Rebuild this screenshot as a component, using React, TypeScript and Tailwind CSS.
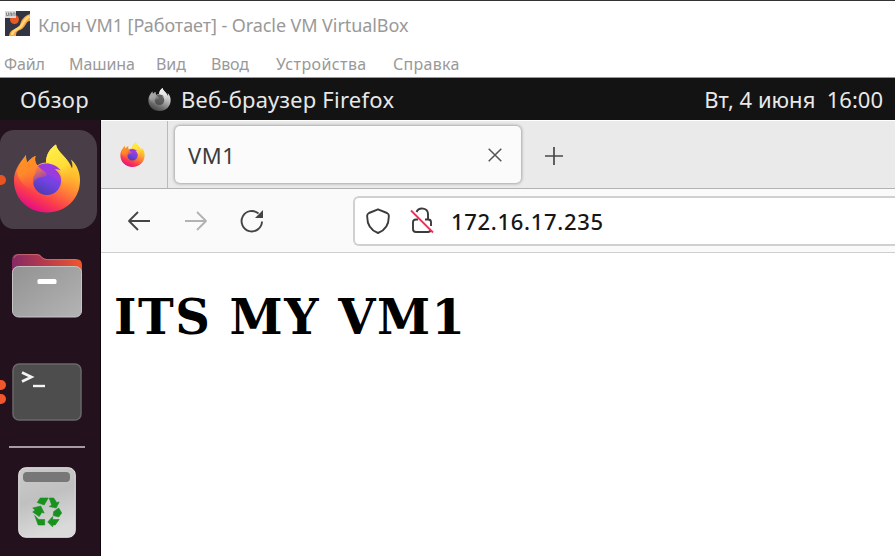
import React from "react";

function FirefoxLogo({ id, className, gray = false }: { id: string; className: string; gray?: boolean }) {
  return (
    <svg viewBox="0 0 66 68" className={className} style={gray ? { filter: "grayscale(1) brightness(1.05)" } : undefined}>
      <defs>
        <linearGradient id={id + "a"} x1="0.85" y1="0.1" x2="0.4" y2="1">
          <stop offset="0" stopColor="#ffe23c" />
          <stop offset="0.3" stopColor="#ffbd2e" />
          <stop offset="0.55" stopColor="#ff8036" />
          <stop offset="0.8" stopColor="#fb3c4c" />
          <stop offset="1" stopColor="#e8117f" />
        </linearGradient>
        <linearGradient id={id + "b"} x1="0.8" y1="0" x2="0.3" y2="1">
          <stop offset="0" stopColor="#9a3be0" />
          <stop offset="0.5" stopColor="#7542e5" />
          <stop offset="1" stopColor="#4a3cae" />
        </linearGradient>
        <linearGradient id={id + "c"} x1="0.3" y1="0" x2="0.6" y2="1">
          <stop offset="0" stopColor="#fff04a" />
          <stop offset="0.5" stopColor="#ffdc36" />
          <stop offset="0.95" stopColor="#ffa52d" stopOpacity="0" />
        </linearGradient>
        <linearGradient id={id + "d"} x1="0" y1="0" x2="0.5" y2="1">
          <stop offset="0" stopColor="#ff9220" />
          <stop offset="0.5" stopColor="#ff8a2a" />
          <stop offset="1" stopColor="#ff5a3a" stopOpacity="0" />
        </linearGradient>
      </defs>
      <path
        fill={`url(#${id}a)`}
        d="M33 68C14 68 0 54 0 36C0 26 5 19 12 10.500C12 13 12 16 13.500 18C15 16 18 13 21.500 11.500C20.500 15 21 18 23 21C26 19 29 18 32 18C32 10 36 4 42 0C43 7 51 11 56 20L58 24C59 21 58 18 57 15C63 20 66 28 66 36C66 54 52 68 33 68Z"
      />
      <path
        fill={`url(#${id}c)`}
        d="M32 18C32 10 36 4 42 0C43 7 51 11 56 20C62 31 58 45 47 49C50 40 49 30 44 25C41 21 36 19 32 18Z"
      />
      <circle cx="33" cy="36.500" r="14" fill={`url(#${id}b)`} />
      <path fill="#9a3be0" d="M23 22C29 17 41 18 47 26C44 25 42 24.500 40 25C44 27 47 32 46.500 37L31 28L21 27Z" />
      <path
        fill={`url(#${id}d)`}
        d="M12 10.500C12 13 12 16 13.500 18C15 16 18 13 21.500 11.500C20.500 15 21 18 24 21.500C27 25.500 32 27 33 30C32 33 27 32 24 33.500C20 36 18 40 21 46C12 44 4 36 3 27Z"
      />
    </svg>
  );
}

function VirtualBoxIcon() {
  return (
    <svg viewBox="0 0 26 26" className="h-[26px] w-[26px] shrink-0">
      <rect width="25" height="25" fill="#303443" />
      <path d="M4 25C5 17 12 19 15 14C16 9 19 5 25 3V10C21 10 21 15 17 18C13 20 11 20 11 25Z" fill="#f7a43c" />
      <path d="M7 24C8 18 14 19 17 14C19 10 21 7 24.500 5.500" fill="none" stroke="#ffd67c" strokeWidth="2.500" />
      <circle cx="9.500" cy="8.500" r="4.500" fill="#e75a25" />
      <rect width="11" height="7" fill="#d9d9d9" />
      <path d="M1.500 1.500v3h2v-3M5 5V2h1.500v3M8 5V2h2v3" fill="none" stroke="#777" strokeWidth="0.8" />
    </svg>
  );
}

function FolderIcon() {
  return (
    <svg viewBox="0 0 70 64" className="h-[64px] w-[70px]">
      <defs>
        <linearGradient id="folderBack">
          <stop offset="0" stopColor="#852a65" />
          <stop offset="0.5" stopColor="#b93c4a" />
          <stop offset="1" stopColor="#f0562a" />
        </linearGradient>
        <linearGradient id="folderFront" x1="0" y1="0" x2="1" y2="1">
          <stop offset="0" stopColor="#929292" />
          <stop offset="1" stopColor="#b4b4b4" />
        </linearGradient>
      </defs>
      <path d="M0 24V6Q0 0 6 0H25Q28 0 30 3Q32 5 35 5H64Q70 5 70 11V24Z" fill="url(#folderBack)" />
      <path d="M2 4Q3 .6 6 .6H25Q28 .6 30 3.500Q32 5.600 35 5.600H64" fill="none" stroke="#d67b79" strokeWidth="0.7" />
      <rect x="0.500" y="12.500" width="69" height="50.500" rx="6" fill="url(#folderFront)" stroke="#c4c4c4" />
      <rect x="25.500" y="25" width="19" height="5" rx="1.500" fill="#fff" />
    </svg>
  );
}

function TerminalIcon() {
  return (
    <svg viewBox="0 0 70 58" className="h-[58px] w-[70px]">
      <rect x="1" y="1" width="68" height="56" rx="6" fill="#4d4d4d" stroke="#686868" strokeWidth="1.500" />
      <path d="M10 9.500L19.500 14L10 18.500" fill="none" stroke="#f4f4f4" strokeWidth="2.600" />
      <path d="M21 23H33" stroke="#f4f4f4" strokeWidth="2.400" />
    </svg>
  );
}

function TrashIcon() {
  return (
    <svg viewBox="0 0 58 71" className="h-[71px] w-[58px]">
      <defs>
        <linearGradient id="binBody" x1="0" y1="0" x2="0.3" y2="1">
          <stop offset="0" stopColor="#cbcbcb" />
          <stop offset="0.5" stopColor="#c0c0c0" />
          <stop offset="1" stopColor="#dadada" />
        </linearGradient>
      </defs>
      <rect x="0.700" y="0.700" width="56.600" height="69.600" rx="7" fill="url(#binBody)" stroke="#e5e5e5" />
      <rect x="5" y="5" width="47" height="10" rx="4" fill="#777" />
      <g fill="#18911f" stroke="#18911f" strokeWidth="0.6" strokeLinejoin="round" transform="translate(-0.800 -0.500)">
        <path d="M23 31.500H31L27 38.500L20 36Z" />
        <path d="M32 31.500H36.500L39.500 36L42 35.500L39 41.500L32 40L34.500 38.500Z" />
        <path d="M15.500 41.500L23.500 39.500L27 46.500L24.500 46L22 50L15.500 45.500L18 43.500Z" />
        <path d="M17.500 49L21.500 53H27.500V58.500H21Z" />
        <path d="M36.500 45L41.500 41.500L44.500 46.500L41.500 50.500L36 49Z" />
        <path d="M30.500 55.500L35.500 50V53H42L38 58.500H35.500V60.500Z" />
      </g>
    </svg>
  );
}

function Dock() {
  return (
    <aside className="flex w-[101px] shrink-0 flex-col border-r border-[#0c050b] bg-[#23121e]">
      <div className="relative mt-[10px] h-[99px] w-[97px] rounded-r-[18px] rounded-l-[14px] bg-[#493e47] pt-[14px] pl-[14px]">
        <FirefoxLogo id="dock" className="h-[69px] w-[66px]" />
        <span className="absolute top-[45px] -left-[4px] h-[10px] w-[10px] rounded-full bg-[#e95420]" />
      </div>
      <div className="mt-[25px] ml-3 h-[64px]">
        <FolderIcon />
      </div>
      <div className="relative mt-[45px] h-[58px] pl-3">
        <TerminalIcon />
        <span className="absolute top-[17px] -left-[4px] h-[10px] w-[10px] rounded-full bg-[#f0562a]" />
        <span className="absolute top-[31px] -left-[4px] h-[10px] w-[10px] rounded-full bg-[#f0562a]" />
      </div>
      <div className="mt-[25px] ml-[9px] h-[2px] w-[76px] bg-[#a49ca2]" />
      <div className="mt-[19px] ml-[18px]">
        <TrashIcon />
      </div>
    </aside>
  );
}

function TabStrip() {
  return (
    <div className="flex h-[69px] border-t border-b border-t-white border-b-[#b2b2b2] bg-[#eaeaea]">
      <div className="flex w-[67px] items-center border-r border-[#bbb] pl-[19px]">
        <FirefoxLogo id="pin" className="h-[25px] w-[25px]" />
      </div>
      <div className="mt-[5px] ml-[7px] flex h-[57px] w-[346px] items-center justify-between rounded-[5px] bg-[#fbfbfb] pr-[19px] pl-[13px] shadow-[0_0_3px_1px_rgba(0,0,0,0.28)]">
        <span className="mt-[2px] text-[22px] tracking-[0.6px] text-[#3b3b40]">VM1</span>
        <svg viewBox="0 0 14 14" className="h-[14px] w-[14px]">
          <path d="M.7 .7L13.300 13.300M13.300 .7L.7 13.300" stroke="#555" strokeWidth="1.500" fill="none" />
        </svg>
      </div>
      <svg viewBox="0 0 20 20" className="mt-[25px] ml-[23px] h-[20px] w-[20px]">
        <path d="M1 10H19M10 1V19" stroke="#484848" strokeWidth="1.700" fill="none" />
      </svg>
    </div>
  );
}

function Toolbar() {
  return (
    <div className="flex h-[64px] items-center border-b border-[#cecece] bg-[#fafafa]">
      <svg viewBox="0 0 24 20" className="ml-[26px] h-[20px] w-[24px]" fill="none" stroke="#454545" strokeWidth="1.800">
        <path d="M23 10H2M11 1L2 10L11 19" strokeLinejoin="round" />
      </svg>
      <svg viewBox="0 0 24 20" className="ml-[33px] h-[20px] w-[24px]" fill="none" stroke="#b2b2b2" strokeWidth="1.800">
        <path d="M1 10H22M13 1L22 10L13 19" strokeLinejoin="round" />
      </svg>
      <svg viewBox="0 0 24 24" className="ml-[32px] h-[24px] w-[24px]">
        <path d="M22 12.500A10.200 10.200 0 1 1 18.500 4.500" fill="none" stroke="#444" strokeWidth="1.900" />
        <path d="M23 1V9H15Z" fill="#444" />
      </svg>
      <div className="ml-[89px] flex h-[50px] flex-1 items-center rounded-l-[6px] border-2 border-r-0 border-[#d0d0d0] bg-white">
        <svg viewBox="0 0 24 26" className="ml-[11px] h-[26px] w-[24px]">
          <path
            d="M12 1.300L21 5Q23 6 22.800 8C23 16 20 22 12 25C4 22 1 16 1.200 8Q1 6 3 5Z"
            fill="none"
            stroke="#3b3b3b"
            strokeWidth="1.900"
            strokeLinejoin="round"
          />
        </svg>
        <svg viewBox="0 0 24 27" className="ml-[20px] h-[27px] w-[24px]" fill="none">
          <path d="M6.500 5C9-.5 18 .8 18 7V12" stroke="#3b3b3b" strokeWidth="1.900" />
          <path d="M8 12.500H6Q3 12.500 3 15V22Q3 25 6 25H18Q20 25 21 23M15 12.500H18Q21 12.500 21 15V19" stroke="#3b3b3b" strokeWidth="1.900" />
          <path d="M1 3.500L23 25.500" stroke="#ed3159" strokeWidth="1.800" />
        </svg>
        <span className="mt-[2px] ml-[17px] text-[22px] font-medium tracking-[0.7px] whitespace-nowrap text-[#161616]">
          172.16.17.235
        </span>
      </div>
    </div>
  );
}

export default function App() {
  return (
    <div className="flex h-[556px] w-[895px] flex-col overflow-hidden bg-white font-['Noto_Sans',sans-serif]">
      <header className="flex h-[78px] shrink-0 flex-col border-t border-b border-t-[#333] border-b-[#999] text-[#999]">
        <div className="flex h-[45px] items-center gap-[7px] pl-[5px] whitespace-nowrap">
          <VirtualBoxIcon />
          <span className="mt-[3px] text-[18px] tracking-[-0.08px]">Клон VM1 [Работает] - Oracle VM VirtualBox</span>
        </div>
        <nav className="flex h-[31px] items-center pt-[5px] text-[16px] tracking-[-0.1px] whitespace-nowrap">
          <span className="ml-[4px] w-[65px]">Файл</span>
          <span className="w-[87px]">Машина</span>
          <span className="w-[55px]">Вид</span>
          <span className="w-[65px] tracking-[-0.2px]">Ввод</span>
          <span className="w-[117px] tracking-[0.4px]">Устройства</span>
          <span className="tracking-[0.3px]">Справка</span>
        </nav>
      </header>
      <div className="flex h-[42px] shrink-0 items-center bg-[#131313] pr-[12px] pl-[20px] text-[22px] whitespace-nowrap text-[#e8e8e8]">
        <span className="w-[128px] tracking-[0.4px]">Обзор</span>
        <FirefoxLogo id="bar" gray className="h-[23px] w-[23px]" />
        <span className="ml-[10px] tracking-[0.25px]">Веб-браузер Firefox</span>
        <span className="ml-auto whitespace-pre">Вт, 4 июня  16:00</span>
      </div>
      <div className="flex min-h-0 flex-1">
        <Dock />
        <main className="min-w-0 flex-1 bg-white">
          <TabStrip />
          <Toolbar />
          <h1 className="mt-[36px] ml-[13px] font-['DejaVu_Serif',serif] text-[48px] leading-[56px] font-bold tracking-[1.5px] whitespace-nowrap text-black">
            ITS MY VM1
          </h1>
        </main>
      </div>
    </div>
  );
}
